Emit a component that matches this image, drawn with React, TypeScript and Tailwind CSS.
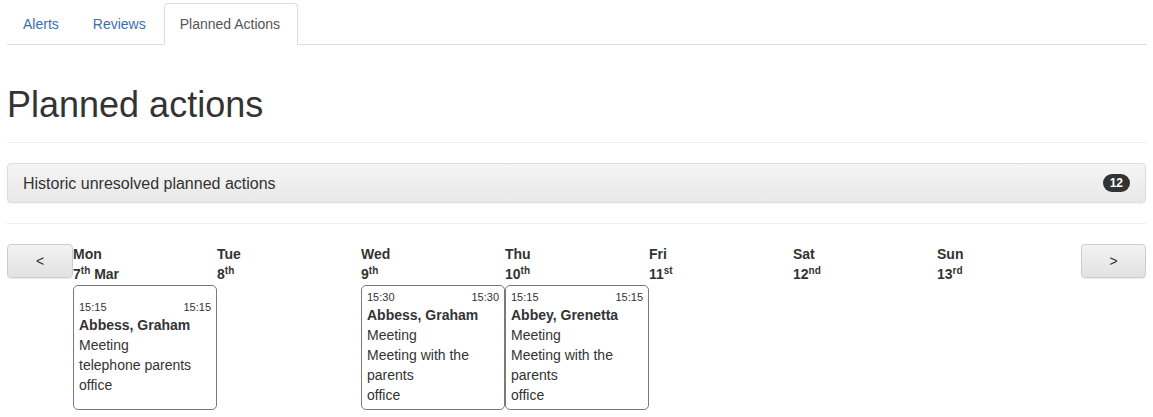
import React from "react";

type Action = { start: string; end: string; name: string; lines: string[] };

const days: { d: string; n: string; s: string; extra?: string; action?: Action }[] = [
  { d: "Mon", n: "7", s: "th", extra: " Mar", action: { start: "15:15", end: "15:15", name: "Abbess, Graham", lines: ["Meeting", "telephone parents", "office"] } },
  { d: "Tue", n: "8", s: "th" },
  { d: "Wed", n: "9", s: "th", action: { start: "15:30", end: "15:30", name: "Abbess, Graham", lines: ["Meeting", "Meeting with the", "parents", "office"] } },
  { d: "Thu", n: "10", s: "th", action: { start: "15:15", end: "15:15", name: "Abbey, Grenetta", lines: ["Meeting", "Meeting with the", "parents", "office"] } },
  { d: "Fri", n: "11", s: "st" },
  { d: "Sat", n: "12", s: "nd" },
  { d: "Sun", n: "13", s: "rd" },
];

const colStart = ["col-start-2", "col-start-3", "col-start-4", "col-start-5", "col-start-6", "col-start-7", "col-start-8"];

export default function App() {
  return (
    <div
      className="w-[1153px] h-[417px] overflow-hidden bg-white px-[7px] text-[14px] leading-[20px] text-[#333]"
      style={{ fontFamily: '"Liberation Sans", Arial, Helvetica, sans-serif' }}
    >
      {/* Tabs */}
      <ul className="mt-[3px] flex border-b border-[#ddd]">
        <li className="-mb-px mr-[2px]">
          <a className="block px-[15px] py-[10px] border border-transparent rounded-t-[4px] text-[#3a72a8]">Alerts</a>
        </li>
        <li className="-mb-px mr-[2px]">
          <a className="block px-[15px] py-[10px] border border-transparent rounded-t-[4px] text-[#3a72a8]">Reviews</a>
        </li>
        <li className="-mb-px mr-[2px]">
          <a className="block w-[134px] px-[15px] py-[10px] border border-[#ddd] border-b-white bg-white rounded-t-[4px] text-[#555]">Planned Actions</a>
        </li>
      </ul>

      {/* Page header */}
      <div className="mt-[40px] pb-[8px] border-b border-[#eee]">
        <h1 className="text-[36px] leading-[39px] font-normal mb-[10px] text-[#333]">Planned actions</h1>
      </div>

      {/* Panel */}
      <div className="mt-[20px] border border-[#ddd] rounded-[4px] bg-gradient-to-b from-[#f5f5f5] to-[#e8e8e8] shadow-[0_1px_2px_rgba(0,0,0,0.05)]">
        <div className="flex items-center justify-between px-[15px] py-[10px]">
          <span className="text-[16px] leading-[17px]">Historic unresolved planned actions</span>
          <span className="bg-[#333] text-white text-[12px] font-bold leading-[12px] px-[7px] py-[3px] rounded-[10px]">12</span>
        </div>
      </div>

      <hr className="mt-[20px] border-0 border-t border-[#eee]" />

      {/* Calendar */}
      <div className="mt-[20px] grid grid-cols-[66px_repeat(7,144px)_1fr] grid-rows-[auto_auto]">
        <div className="col-start-1 row-start-1 self-start">
          <button className="w-full h-[34px] border border-[#ccc] rounded-[4px] bg-gradient-to-b from-[#f3f3f3] to-[#e2e2e2] text-[#333] text-[14px] shadow-[inset_0_1px_0_rgba(255,255,255,0.15),0_1px_1px_rgba(0,0,0,0.075)]">
            &lt;
          </button>
        </div>
        {days.map((day, i) => (
          <div key={day.d} className={`${colStart[i]} row-start-1 font-bold pb-px`}>
            <div>{day.d}</div>
            <div>
              {day.n}
              <sup className="text-[10px] font-bold">{day.s}</sup>
              {day.extra}
            </div>
          </div>
        ))}
        <div className="col-start-9 row-start-1 self-start">
          <button className="w-full h-[34px] border border-[#ccc] rounded-[4px] bg-gradient-to-b from-[#f3f3f3] to-[#e2e2e2] text-[#333] text-[14px] shadow-[inset_0_1px_0_rgba(255,255,255,0.15),0_1px_1px_rgba(0,0,0,0.075)]">
            &gt;
          </button>
        </div>
        {days.map((day, i) =>
          day.action ? (
            <div
              key={day.d + "c"}
              className={`${colStart[i]} row-start-2 flex flex-col justify-center border border-[#7a7a7a] rounded-[5px] px-[5px] pt-[3px] pb-[4px]`}
            >
              <div className="flex justify-between text-[11px] leading-[16px]">
                <span>{day.action.start}</span>
                <span>{day.action.end}</span>
              </div>
              <div className="font-bold">{day.action.name}</div>
              {day.action.lines.map((l, j) => (
                <div key={j}>{l}</div>
              ))}
            </div>
          ) : null
        )}
      </div>
    </div>
  );
}
